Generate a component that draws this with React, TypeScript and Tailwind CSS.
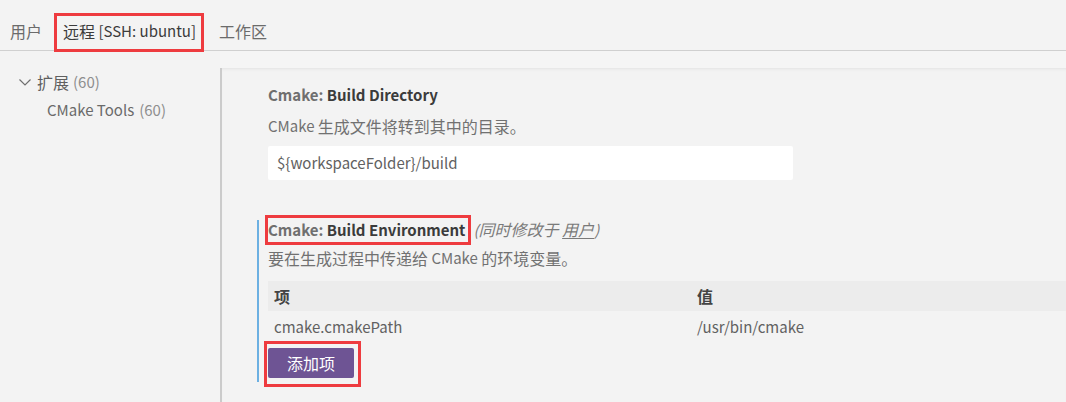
import React from "react";

const font = { fontFamily: '"Noto Sans CJK SC", "Noto Sans", sans-serif' };

function C({ children, className = "" }: { children: React.ReactNode; className?: string }) {
  return <span className={"text-[16px] " + className}>{children}</span>;
}

function Chevron() {
  return (
    <svg width="14" height="14" viewBox="0 0 14 14" className="shrink-0">
      <path d="M1.5 4.5 L7 10 L12.5 4.5" fill="none" stroke="#6f6f6f" strokeWidth="1.2" />
    </svg>
  );
}

export default function App() {
  return (
    <div
      className="w-[1066px] h-[402px] bg-[#f3f3f3] overflow-hidden text-[15px] text-[#6f6f6f] flex flex-col"
      style={font}
    >
      {/* Tabs */}
      <div className="h-[51px] border-b border-[#d0d0d0] flex pl-[10px] gap-[21px] shrink-0">
        <div className="h-full flex items-center pt-[12px] text-[#6b6b6b] leading-[20px]">
          <C>用户</C>
        </div>
        <div className="relative h-full flex items-center pt-[12px] text-[#3c3c3c] leading-[20px] whitespace-pre">
          <C>远程</C> [SSH: ubuntu]
          <div className="absolute top-[13px] bottom-[-2px] left-[-9px] right-[-8px] border-[3px] border-[#ee3b3f] z-10" />
        </div>
        <div className="h-full flex items-center pt-[12px] ml-[2px] text-[#6b6b6b] leading-[20px]">
          <C>工作区</C>
        </div>
      </div>

      <div className="flex flex-1 min-h-0">
        {/* Sidebar */}
        <div className="w-[220px] shrink-0 pt-[17px] leading-[28px]">
          <div className="flex items-center h-[28px] pl-[18px] gap-[5px]">
            <Chevron />
            <C className="text-[#5f5f5f]">扩展</C>
            <span className="text-[#8e8e8e] -ml-[1px]">(60)</span>
          </div>
          <div className="flex items-center h-[28px] pl-[47px] gap-[5px]">
            <span className="text-[#6a6a6a]">CMake Tools</span>
            <span className="text-[#8e8e8e]">(60)</span>
          </div>
        </div>

        {/* Content */}
        <div className="flex-1 flex flex-col min-w-0 bg-[#f5f5f5]">
          <div className="flex-1 mt-[17px] border-l-2 border-[#cbcbcb] bg-[#f3f3f3] shadow-[inset_0_3px_3px_-2px_#e2e2e2] pl-[35px] pt-[17px]">
            {/* Setting 1 */}
            <div className="border-l-2 border-transparent pl-[9px]">
              <div className="h-[20px] leading-[20px] font-semibold">
                <span className="text-[#6f6f6f]">Cmake: </span>
                <span className="text-[#3b3b3b]">Build Directory</span>
              </div>
              <div className="h-[20px] flex items-center mt-[11px] text-[#717171] whitespace-pre">
                CMake <C>生成文件将转到其中的目录。</C>
              </div>
              <div className="mt-[10px] w-[525px] h-[34px] bg-white rounded-[2px] flex items-center pl-[9px] text-[#616161]">
                {"${workspaceFolder}/build"}
              </div>
            </div>

            {/* Setting 2 */}
            <div className="mt-[40px] border-l-2 border-[#6cb0e2] pl-[9px] pb-[4px]">
              <div className="h-[19px] leading-[19px] flex items-center">
                <span className="relative font-semibold whitespace-pre">
                  <span className="text-[#6f6f6f]">Cmake: </span>
                  <span className="text-[#3b3b3b]">Build Environment</span>
                  <span className="absolute top-[-5px] bottom-[-6px] left-[-3px] right-[-6px] border-[3px] border-[#ee3b3f]" />
                </span>
                <span className="ml-[8px] italic text-[#7a7a7a] whitespace-pre flex items-center">
                  (<C>同时修改于 <span className="underline underline-offset-2">用户</span></C>)
                </span>
              </div>
              <div className="h-[20px] flex items-center mt-[9px] text-[#717171] whitespace-pre">
                <C>要在生成过程中传递给</C> CMake <C>的环境变量。</C>
              </div>
              <div className="mt-[13px]">
                <div className="flex h-[30px] items-center bg-[#ececec] font-semibold text-[#444]">
                  <div className="w-[423px] pl-[6px]">
                    <C>项</C>
                  </div>
                  <div className="pl-[6px]">
                    <C>值</C>
                  </div>
                </div>
                <div className="flex h-[32px] items-center text-[#616161]">
                  <div className="w-[423px] pl-[6px]">cmake.cmakePath</div>
                  <div className="pl-[6px]">/usr/bin/cmake</div>
                </div>
              </div>
              <div className="mt-[5px] relative w-[86px] h-[30px]">
                <button className="w-full h-full bg-[#6e5494] rounded-[2px] text-white leading-[20px]">
                  <C>添加项</C>
                </button>
                <div className="absolute top-[-7px] bottom-[-9px] left-[-4px] right-[-7px] border-[3px] border-[#ee3b3f]" />
              </div>
            </div>
          </div>
        </div>
      </div>
    </div>
  );
}
